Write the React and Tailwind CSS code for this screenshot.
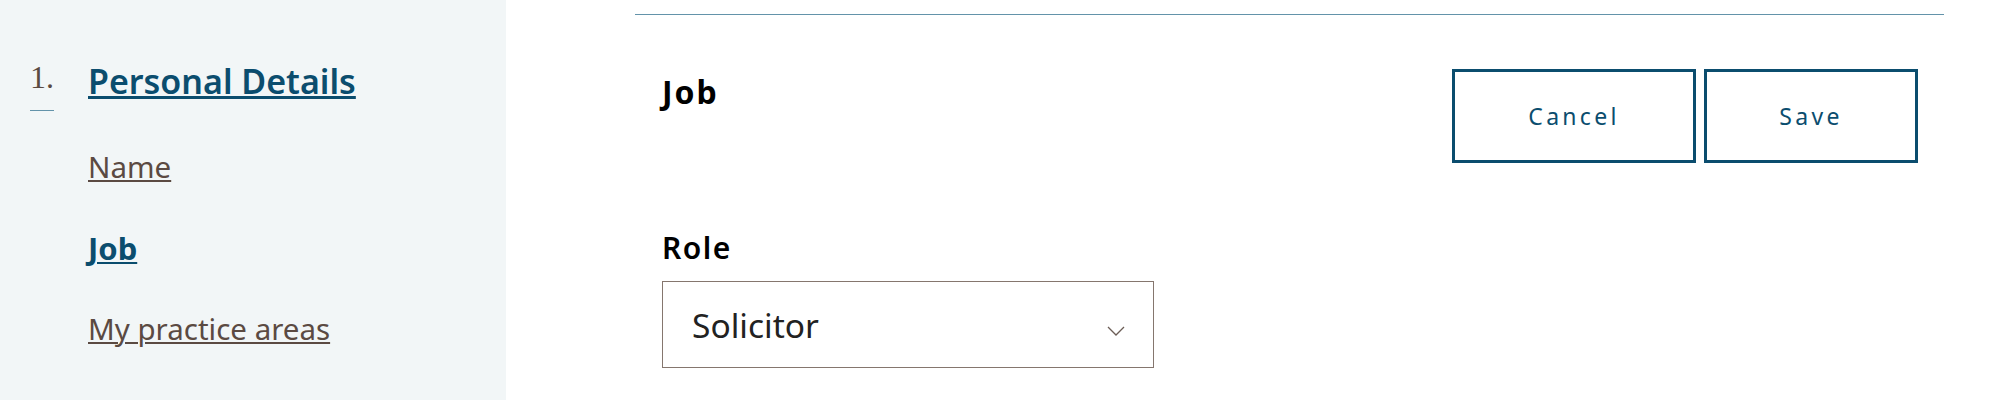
import React from "react";

const sans = "font-['Noto_Sans','Liberation_Sans',sans-serif]";

function SideLink({ children, active }) {
  return (
    <a
      href="#"
      className={
        active
          ? "block text-[31px] leading-[40px] font-bold text-[#0b4d6e] underline underline-offset-[2px] decoration-2"
          : "block text-[29.5px] leading-[40px] text-[#5b4a42] underline underline-offset-[2px] decoration-2"
      }
    >
      {children}
    </a>
  );
}

export default function App() {
  return (
    <div className={`flex h-[400px] w-[2000px] bg-white ${sans}`}>
      <aside className="w-[506px] shrink-0 bg-[#f2f6f7] pl-[30px]">
        <div className="flex items-start">
          <div className="w-[58px] shrink-0 pt-[57px]">
            <div className="font-['Liberation_Serif',serif] text-[32px] leading-[40px] text-[#5b4a42]">1.</div>
            <div className="mt-[13px] h-px w-[24px] bg-[#6393aa]" />
          </div>
          <div className="pt-[61px]">
            <a
              href="#"
              className="block text-[34px] leading-[40px] font-semibold text-[#0b4d6e] underline underline-offset-[2px] decoration-[3px]"
            >
              Personal Details
            </a>
            <div className="mt-[46px] flex flex-col gap-[41px]">
              <SideLink>Name</SideLink>
              <SideLink active>Job</SideLink>
              <SideLink>My practice areas</SideLink>
            </div>
          </div>
        </div>
      </aside>

      <main className="flex-1 pl-[129px] pr-[56px] pt-[14px]">
        <div className="border-t border-[#6393aa] pl-[27px] pr-[26px]">
          <div className="flex items-start justify-between pt-[54px]">
            <h2 className="mt-[3px] text-[32px] leading-[40px] font-bold tracking-[2px] text-black">Job</h2>
            <div className="flex gap-[8px]">
              <button className="h-[94px] w-[244px] border-[3px] border-[#0b4d6e] text-[23px] tracking-[3.3px] text-[#0b4d6e]">
                Cancel
              </button>
              <button className="h-[94px] w-[214px] border-[3px] border-[#0b4d6e] text-[23px] tracking-[3.3px] text-[#0b4d6e]">
                Save
              </button>
            </div>
          </div>
          <div className="mt-[65px]">
            <label className="block text-[30px] font-semibold leading-[40px] tracking-[1.5px] text-black">Role</label>
            <div className="mt-[13px] flex h-[87px] w-[492px] items-center justify-between border border-[#85766e] pl-[29px] pr-[28px]">
              <span className="text-[33.5px] leading-[40px] text-[#222]">Solicitor</span>
              <svg width="18" height="10" viewBox="0 0 18 10" className="mt-[12px]">
                <path d="M1 1l8 8 8-8" fill="none" stroke="#6b5d56" strokeWidth="1.3" />
              </svg>
            </div>
          </div>
        </div>
      </main>
    </div>
  );
}
